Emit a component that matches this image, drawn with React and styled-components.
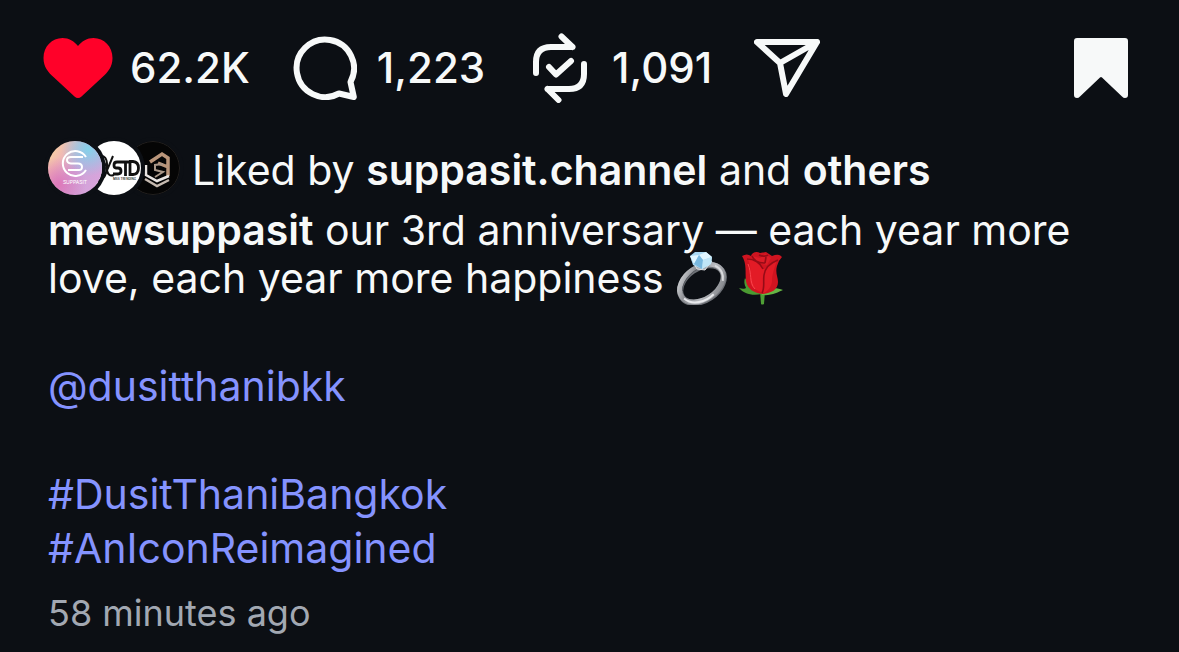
import React from "react";
import styled, { createGlobalStyle } from "styled-components";

const GlobalStyle = createGlobalStyle`
  *, *::before, *::after { box-sizing: border-box; }
  body {
    margin: 0;
    min-height: 100vh;
    background: #0c0f14;
    color: #f7f9f9;
    font-family: Inter, "Liberation Sans", sans-serif;
    font-size: 41px;
  }
`;

const Post = styled.article`
  padding: 32px 48px 12px;
`;

const Actions = styled.div`
  display: flex;
  align-items: center;
  gap: 39px;
  height: 72px;
  margin: 0 -6px;
`;

const Action = styled.button`
  display: flex;
  align-items: center;
  gap: 16px;
  margin-left: ${(p) => (p.$end ? "auto" : "0")};
  padding: 0;
  border: 0;
  background: none;
  color: inherit;
  font: inherit;
  font-size: 42px;
  font-weight: 500;
  line-height: 54px;
  cursor: pointer;
`;

const IconSlot = styled.span`
  display: flex;
  align-items: center;
  justify-content: center;
  width: 72px;
  height: 72px;
`;

const Stroke = styled.svg`
  display: block;
  fill: none;
  stroke: currentColor;
  stroke-width: 6;
  stroke-linecap: round;
  stroke-linejoin: round;
`;

const Solid = styled.svg`
  display: block;
  fill: ${(p) => p.$color || "currentColor"};
`;

const Likes = styled.div`
  display: flex;
  align-items: center;
  gap: 12px;
  margin-top: 37px;
`;

const Avatars = styled.div`
  display: flex;
  isolation: isolate;
`;

const Avatar = styled.svg`
  display: block;
  position: relative;
  z-index: ${(p) => p.$layer};
  width: 54px;
  height: 54px;
  border-radius: 50%;
  box-shadow: 0 0 0 4px #0c0f14;

  & + & { margin-left: -15px; }
`;

const LikesText = styled.p`
  margin: 0;
  padding-top: 4px;
  line-height: 48px;
`;

const Name = styled.a`
  color: inherit;
  font-weight: 600;
  text-decoration: none;
`;

const Caption = styled.p`
  margin: 11px 0 0;
  line-height: 48px;
`;

const Emoji = styled.svg`
  width: 54px;
  height: 54px;
  margin: -12px 6px -12px 0;
  vertical-align: baseline;
`;

const Tags = styled.p`
  margin: 57px 0 0;
  line-height: 54px;
`;

const Tag = styled.a`
  display: block;
  width: fit-content;
  color: #8593ff;
  text-decoration: none;
`;

const Time = styled.time`
  display: block;
  margin-top: 14px;
  color: #a2a8b2;
  font-size: 36px;
  line-height: 48px;
`;

function Ring() {
  return (
    <Emoji viewBox="0 0 54 54" role="img" aria-label="ring">
      <defs>
        <linearGradient id="band" x1="0" y1="0" x2="1" y2="1">
          <stop offset="0" stopColor="#e4e5e8" />
          <stop offset=".3" stopColor="#8c8e93" />
          <stop offset=".6" stopColor="#b9bbc0" />
          <stop offset="1" stopColor="#77797e" />
        </linearGradient>
      </defs>
      <g fill="none" transform="rotate(-34 27 33)">
        <ellipse cx="27" cy="33" rx="24" ry="16" stroke="#6d7076" strokeWidth="6" />
        <ellipse cx="27" cy="32" rx="24" ry="16" stroke="url(#band)" strokeWidth="5" />
        <path d="M4 35C7 46 20 50 31 48" stroke="#e8e9ec" strokeWidth="2" />
        <path d="M48 25C52 31 50 38 46 42" stroke="#dadbde" strokeWidth="2" />
        <path d="M7 28C13 18 31 15 42 22" stroke="#55585e" strokeWidth="1" />
      </g>
      <path d="M17 9l5 9 8 1 7-9-6 3-4 5-4-7Z" fill="#a7abb0" stroke="#dfe2e5" />
      <path d="M15 5l5-4h11l6 5-1 7-9 5-9-4Z" fill="#a9d8f2" />
      <path d="M15 5l9-1 7-3 6 5-9 3-4-5-5 9-4-8Z" fill="#e1f6ff" />
      <path d="M24 4l4 5-1 9-8-5Z" fill="#78b8df" />
      <path d="M28 9l9-3-1 7-9 5Z" fill="#bfe6f8" />
    </Emoji>
  );
}

function Rose() {
  return (
    <Emoji viewBox="0 0 54 54" role="img" aria-label="rose">
      <path d="M25 40h5l-1 13q-2 1-3 0Z" fill="#4f9f35" />
      <path d="M27 43C17 45 9 43 4 37c3 1 6 1 7 0-2-4-2-7-1-10 4 7 8 10 17 16Z" fill="#4b9a32" />
      <path d="M27 43c5-6 13-7 21-4-5 2-11 6-21 5Z" fill="#65b544" />
      <path d="M7 5q5-3 9 0c1-4 6-5 9-3l6-1 6 4q7-3 10 1-4 4-5 9c-2 7 1 11 1 16 0 8-7 11-15 12-9-1-16-5-17-13C10 21 12 13 7 5Z" fill="#cf1420" />
      <path d="M12 7l9 3 8 8 13-9c-3 10-5 14-5 22-1 5-4 9-8 11-8-2-14-6-14-13 0-7 2-14-3-22Z" fill="#e31b26" />
      <path d="M17 5l8 2 5-4 6 4-4 7-9-2Z" fill="#dc1c27" />
      <path d="M12 8c7 0 13 4 16 10M17 5c2 5 7 7 13 7M24 4c4 2 8 1 9 0M31 6l-1 6M43 9c-8 3-13 8-14 15-1 7 1 13-2 18" fill="none" stroke="#960b16" strokeWidth="1.6" />
      <path d="M13 13c4 9 1 19 7 25" fill="none" stroke="#fa444c" strokeWidth="1" />
    </Emoji>
  );
}

export default function App() {
  return (
    <>
      <GlobalStyle />
      <Post>
        <Actions>
          <Action aria-label="Unlike, 62.2K likes">
            <IconSlot>
              <Solid width="70" height="60" viewBox="0 0 70 60" $color="#ff0129">
                <path d="M35 8C31 3 26 0 19.5 0 9 0 .5 8.5.5 20 .5 29 5 34 11 39.5L31.5 58.5Q35 61.5 38.5 58.5L59 39.5C65 34 69.5 29 69.5 20 69.5 8.5 61 0 50.5 0 44 0 39 3 35 8Z" />
              </Solid>
            </IconSlot>
            62.2K
          </Action>
          <Action aria-label="Comment, 1,223 comments">
            <IconSlot>
              <Stroke width="64" height="64" viewBox="0 0 64 64">
                <path d="M57.5 46A28.7 28.7 0 1 0 46 57.5L60.8 61Z" />
              </Stroke>
            </IconSlot>
            1,223
          </Action>
          <Action aria-label="Repost, 1,091 reposts">
            <IconSlot>
              <Stroke width="54" height="70" viewBox="0 0 54 70">
                <path d="M3 40V29Q3 14 18 14H39.5M28.5 3.5l11 10.5M51 31V41Q51 56 36 56H14.5M14.5 56l11 11M16 34l7 7.5L38 28" />
              </Stroke>
            </IconSlot>
            1,091
          </Action>
          <Action aria-label="Share">
            <IconSlot>
              <Stroke width="66" height="58" viewBox="0 0 66 58">
                <path d="M3 3H63L32 55 26 24ZM26 24 63 3" />
              </Stroke>
            </IconSlot>
          </Action>
          <Action $end aria-label="Remove from saved">
            <IconSlot>
              <Solid width="54" height="60" viewBox="0 0 54 60">
                <path d="M3 0H51Q54 0 54 3V57Q54 60 51 60 49.5 60 48 58.5L28 39.5Q27 38.5 26 39.5L6 58.5Q4.5 60 3 60 0 60 0 57V3Q0 0 3 0Z" />
              </Solid>
            </IconSlot>
          </Action>
        </Actions>

        <Likes>
          <Avatars>
            <Avatar $layer={3} viewBox="0 0 54 54" aria-hidden="true">
              <defs>
                <linearGradient id="pastel" x1="0" y1="0.2" x2="1" y2="0.8">
                  <stop offset="0" stopColor="#f8d3a0" />
                  <stop offset=".22" stopColor="#f0b9b4" />
                  <stop offset=".5" stopColor="#cba3d8" />
                  <stop offset="1" stopColor="#dba4dc" />
                </linearGradient>
                <radialGradient id="sky" cx=".75" cy=".15" r=".5">
                  <stop offset="0" stopColor="#84d3ea" />
                  <stop offset="1" stopColor="#84d3ea" stopOpacity="0" />
                </radialGradient>
                <radialGradient id="blush" cx=".2" cy=".8" r=".5">
                  <stop offset="0" stopColor="#de78ba" />
                  <stop offset="1" stopColor="#de78ba" stopOpacity="0" />
                </radialGradient>
              </defs>
              <path fill="url(#pastel)" d="M0 0h54v54H0z" />
              <path fill="url(#sky)" d="M0 0h54v54H0z" />
              <path fill="url(#blush)" d="M0 0h54v54H0z" />
              <path d="M38 16A12.500 12.500 0 1 0 38 29M35 16H23Q19 16 19 19T23 22.500H30Q34 22.500 34 26T30 29H20" fill="none" stroke="#fff" strokeWidth="2" />
              <text x="27" y="43" textAnchor="middle" fontSize="5" fill="#fff">SUPPASIT</text>
            </Avatar>
            <Avatar $layer={2} viewBox="0 0 54 54" aria-hidden="true">
              <path fill="#fff" d="M0 0h54v54H0z" />
              <path d="M13 15Q20 14 20 24 20 38 11 40M14 18l7 9 5-12M20 29Q21 36 27 34" fill="none" stroke="#111" strokeWidth="2" />
              <path d="M34 21H30Q27 21 27 24T29 27H31Q34 27 34 30T31 33H26M34 21H43M38.500 21V35M43 20V33.500H46Q51.500 33 51.500 27T46 20.500H42" fill="none" stroke="#111" strokeWidth="2.800" />
              <text x="26" y="39" fontSize="3" fontWeight="600" fill="#222">MSS TRENDING</text>
            </Avatar>
            <Avatar $layer={1} viewBox="0 0 54 54" aria-hidden="true">
              <circle cx="27" cy="27" r="26.500" fill="#050505" stroke="#24211f" />
              <path d="M24 21 36 13 42 17V35M32 22 42 26" fill="none" stroke="#b9957a" strokeWidth="3.500" />
              <path d="M37 23 29 24V29L37 31 29 36" fill="none" stroke="#a99788" strokeWidth="2" />
              <path d="M20 24V34L31 40 43 35" fill="none" stroke="#e9e5e2" strokeWidth="2.500" />
              <path d="M19 38l12 7 12-6" fill="none" stroke="#c6bab0" strokeWidth="2.500" />
            </Avatar>
          </Avatars>
          <LikesText>
            Liked by <Name href="#likes">suppasit.channel</Name> and <Name href="#others">others</Name>
          </LikesText>
        </Likes>

        <Caption>
          <Name href="#profile">mewsuppasit</Name> our 3rd anniversary — each year more love, each year more happiness <Ring />
          <Rose />
        </Caption>
        <Tags>
          <Tag href="#dusitthanibkk">@dusitthanibkk</Tag>
          <br />
          <Tag href="#DusitThaniBangkok">#DusitThaniBangkok</Tag>
          <Tag href="#AnIconReimagined">#AnIconReimagined</Tag>
        </Tags>
        <Time>58 minutes ago</Time>
      </Post>
    </>
  );
}
